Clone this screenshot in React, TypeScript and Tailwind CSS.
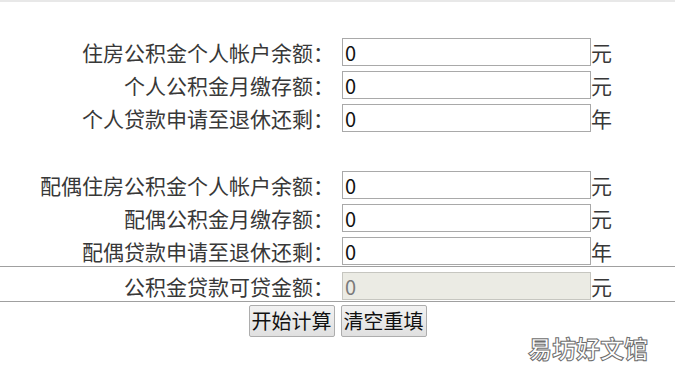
import React from "react";

const font = "font-['Noto_Sans_CJK_SC','Noto_Sans',sans-serif]";

function Row({ label, unit, disabled }: { label: string; unit: string; disabled?: boolean }) {
  return (
    <div className="flex h-[28px] items-center">
      <div className="w-[334px] whitespace-nowrap text-right text-[21px] leading-[28px] text-[#383838]">{label}</div>
      <input
        readOnly
        disabled={disabled}
        value="0"
        className={`ml-[8px] h-[28px] w-[249px] border px-[2px] text-[20px] leading-[26px] outline-none ${font} ${
          disabled
            ? "border-[#c6c6c0] bg-[#ebebe4] text-[#7a7a7a]"
            : "border-[#a9a9a9] bg-white text-[#111]"
        }`}
      />
      <div className="text-[21px] leading-[28px] text-[#383838]">{unit}</div>
    </div>
  );
}

export default function App() {
  return (
    <div className={`relative h-[381px] w-[675px] overflow-hidden bg-white ${font}`}>
      <div className="h-[2px] bg-[#e8e8e8]" />
      <div className="flex flex-col gap-[5px] pt-[36px]">
        <Row label="住房公积金个人帐户余额：" unit="元" />
        <Row label="个人公积金月缴存额：" unit="元" />
        <Row label="个人贷款申请至退休还剩：" unit="年" />
        <div className="h-[29px]" />
        <Row label="配偶住房公积金个人帐户余额：" unit="元" />
        <Row label="配偶公积金月缴存额：" unit="元" />
        <Row label="配偶贷款申请至退休还剩：" unit="年" />
      </div>
      <div className="mt-[1px] border-y border-[#a0a0a0] pb-[1px] pt-[5px]">
        <Row label="公积金贷款可贷金额：" unit="元" disabled />
      </div>
      <div className="mt-[3px] flex justify-center gap-[6px]">
        <button className="h-[32px] rounded-[2px] border border-[#adadad] bg-gradient-to-b from-[#f2f2f2] to-[#e0e0e0] px-[2px] text-[20px] leading-[30px] text-[#111]">
          开始计算
        </button>
        <button className="h-[32px] rounded-[2px] border border-[#adadad] bg-gradient-to-b from-[#f2f2f2] to-[#e0e0e0] px-[2px] text-[20px] leading-[30px] text-[#111]">
          清空重填
        </button>
      </div>
      <div className="absolute left-[528px] top-[333px] text-[24px] font-bold leading-[30px] text-white [-webkit-text-stroke:1px_#6e6e6e]">
        易坊好文馆
      </div>
    </div>
  );
}
